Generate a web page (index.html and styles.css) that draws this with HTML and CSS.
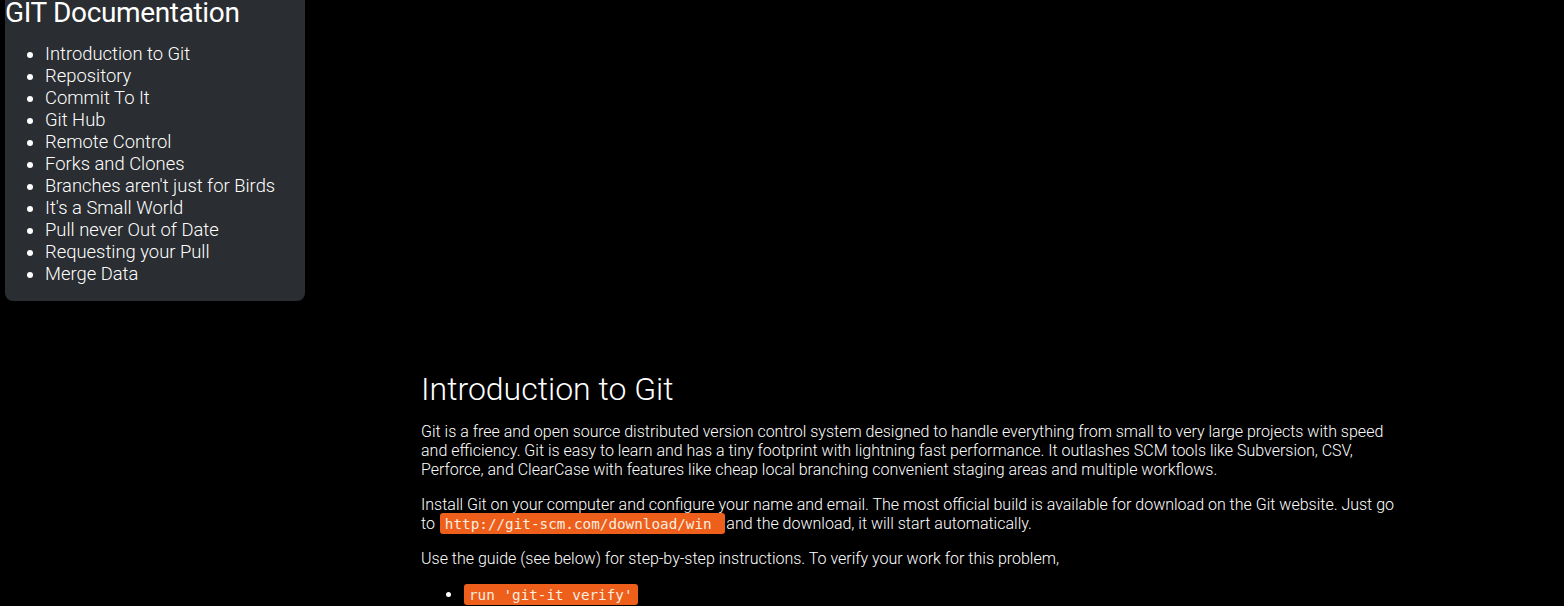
FILE: index.html
```html
<!DOCTYPE html>
<html lang="en">
<head>
<meta charset="utf-8">
<title>GIT Documentation</title>
<link rel="stylesheet" href="styles.css">
</head>
<body>
<nav class="navbar">
  <header class="nav-title">GIT Documentation</header>
  <ul class="nav-list">
    <li><a class="nav-link" href="#Introduction_to_Git">Introduction to Git</a></li>
    <li><a class="nav-link" href="#Repository">Repository</a></li>
    <li><a class="nav-link" href="#Commit_To_It">Commit To It</a></li>
    <li><a class="nav-link" href="#Git_Hub">Git Hub</a></li>
    <li><a class="nav-link" href="#Remote_Control">Remote Control</a></li>
    <li><a class="nav-link" href="#Forks_and_Clones">Forks and Clones</a></li>
    <li><a class="nav-link" href="#Branches">Branches aren't just for Birds</a></li>
    <li><a class="nav-link" href="#Small_World">It's a Small World</a></li>
    <li><a class="nav-link" href="#Pull">Pull never Out of Date</a></li>
    <li><a class="nav-link" href="#Requesting">Requesting your Pull</a></li>
    <li><a class="nav-link" href="#Merge">Merge Data</a></li>
  </ul>
</nav>
<main class="main-doc">
  <section class="main-section" id="Introduction_to_Git">
    <header class="section-title">Introduction to Git</header>
    <p>Git is a free and open source distributed version control system designed to handle everything from small to very large projects with speed and efficiency. Git is easy to learn and has a tiny footprint with lightning fast performance. It outlashes SCM tools like Subversion, CSV, Perforce, and ClearCase with features like cheap local branching convenient staging areas and multiple workflows.</p>
    <p>Install Git on your computer and configure your name and email. The most official build is available for download on the Git website. Just go to <code class="code">http://git-scm.com/download/win </code> and the download, it will start automatically.</p>
    <p>Use the guide (see below) for step-by-step instructions. To verify your work for this problem,</p>
    <ul class="steps">
      <li><code class="code">run 'git-it verify'</code></li>
    </ul>
  </section>
</main>
</body>
</html>
```

FILE: styles.css
```css
html, body {
  margin: 0;
  padding: 0;
  background: #000;
  color: #fff;
  font-family: Roboto, "Liberation Sans", sans-serif;
  font-weight: 300;
}

.navbar {
  width: 300px;
  margin-left: 5px;
  background: #2a2d31;
  border-radius: 0 0 8px 8px;
  padding-bottom: 16px;
}

.nav-title {
  font-size: 28px;
  font-weight: 400;
  line-height: 26px;
  letter-spacing: -0.35px;
}

.nav-list {
  margin: 17px 0 0 0;
  padding-left: 40px;
  font-size: 18.4px;
  line-height: 22px;
}

.nav-link {
  color: #fff;
  text-decoration: none;
}

.main-doc {
  margin: 68px 0 0 421px;
  max-width: 980px;
}

.section-title {
  font-size: 32px;
  line-height: 40px;
  margin-bottom: 13px;
}

.main-section p {
  font-size: 16px;
  margin: 0 0 16px 0;
  line-height: 19px;
}

.code {
  font-family: "DejaVu Sans Mono", "Liberation Mono", monospace;
  font-size: 14.3px;
  font-weight: 400;
  line-height: 1;
  background: #ee5f1b;
  color: #fbeee0;
  padding: 3px 5px 2px;
  margin: 0 1px;
  border-radius: 3px;
}

.steps {
  margin: 0;
  padding-left: 42px;
  font-size: 16px;
  line-height: 22px;
}
```
